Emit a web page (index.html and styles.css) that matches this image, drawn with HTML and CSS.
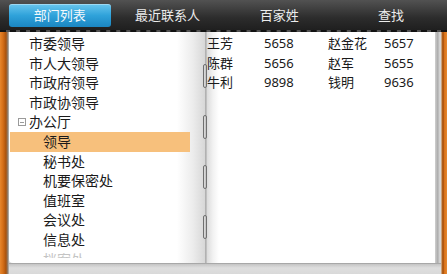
FILE: index.html
```html
<!DOCTYPE html>
<html lang="zh">
<head>
<meta charset="utf-8">
<link rel="stylesheet" href="styles.css">
</head>
<body>
<div class="app">
  <div class="tabs">
    <div class="tab active">部门列表</div>
    <div class="tab">最近联系人</div>
    <div class="tab">百家姓</div>
    <div class="tab">查找</div>
  </div>
  <div class="main">
    <div class="wood-left"></div>
    <div class="book">
      <div class="pages">
        <div class="page-left">
          <div class="list">
            <div class="item l1">市委领导</div>
            <div class="item l1">市人大领导</div>
            <div class="item l1">市政府领导</div>
            <div class="item l1">市政协领导</div>
            <div class="item l0"><span class="toggle"></span>办公厅</div>
            <div class="item l2 selected">领导</div>
            <div class="item l2">秘书处</div>
            <div class="item l2">机要保密处</div>
            <div class="item l2">值班室</div>
            <div class="item l2">会议处</div>
            <div class="item l2">信息处</div>
            <div class="item l2 faded">档案处</div>
          </div>
        </div>
        <div class="spine"></div>
        <div class="page-right">
          <div class="table">
            <span>王芳</span><span>5658</span><span>赵金花</span><span>5657</span>
            <span>陈群</span><span>5656</span><span>赵军</span><span>5655</span>
            <span>牛利</span><span>9898</span><span>钱明</span><span>9636</span>
          </div>
        </div>
        <div class="edge"></div>
        <div class="ring r1"></div>
        <div class="ring r2"></div>
        <div class="ring r3"></div>
        <div class="ring r4"></div>
      </div>
      <div class="bottom"></div>
    </div>
    <div class="wood-right"></div>
  </div>
</div>
</body>
</html>
```

FILE: styles.css
```css
* { box-sizing: border-box; margin: 0; padding: 0; }
html, body { width: 447px; height: 274px; overflow: hidden; }
body { font-family: "Noto Sans", "Noto Sans CJK SC", sans-serif; background: #d6d6d6; }
.app { width: 447px; height: 274px; display: flex; flex-direction: column; }

.tabs {
  height: 32px;
  display: grid;
  grid-template-columns: repeat(4, 1fr);
  padding: 4px 0 3px 0;
  background: linear-gradient(#525252, #2c2c2c 60%, #1f1f1f);
  border-bottom: 2px dashed #111;
}
.tab {
  color: #ececec;
  font-size: 13px;
  display: flex;
  align-items: center;
  justify-content: center;
  line-height: 1;
}
.tab.active {
  margin: 0 1px 0 9px;
  border-radius: 3px;
  color: #f4f8fb;
  background: linear-gradient(#6ac6ee, #2fa2da 50%, #1b86c2);
  box-shadow: inset 0 1px 0 rgba(255,255,255,0.35);
}

.main { flex: 1; display: flex; min-height: 0; }
.wood-left {
  width: 9px;
  background: linear-gradient(90deg, #e7862c 0, #d46e17 3px, #a9520d 6px, #8c8378 8px, #c9c9c9 9px);
}
.wood-right {
  width: 6px;
  background: linear-gradient(90deg, #c8c8c8 0, #cf7a2a 1px, #8f410a 2px, #d66f16 3px, #e58830 6px);
}
.book { flex: 1; display: flex; flex-direction: column; }
.pages { height: 231px; display: flex; position: relative; }
.page-left {
  width: 196px;
  background: linear-gradient(90deg, #fff 0, #fff 168px, #ececec 184px, #d7d7d7 196px);
  border-bottom-left-radius: 4px;
  padding-top: 2px;
}
.list { height: 224px; overflow: hidden; }
.item {
  height: 19.6px;
  line-height: 19.6px;
  font-size: 14px;
  color: #1a1a1a;
  white-space: nowrap;
}
.item.l1 { padding-left: 20px; }
.item.l0 { padding-left: 9px; display: flex; align-items: center; }
.item.l2 { padding-left: 34px; }
.item.selected { background: #f7c07c; margin-right: 15px; margin-left: 1px; padding-left: 33px; }
.item.faded { color: #c4c4c4; }
.toggle {
  width: 8px; height: 8px;
  border: 1px solid #9a9a9a;
  margin-right: 3px;
  position: relative;
}
.toggle::after {
  content: "";
  position: absolute;
  left: 1px; right: 1px; top: 2.5px;
  height: 1px;
  background: #9a9a9a;
}
.spine {
  width: 2px;
  background: linear-gradient(90deg, #a9a9a9, #c8c8c8);
}
.page-right {
  flex: 1;
  background: linear-gradient(90deg, #dcdcdc 0, #f2f2f2 6px, #fff 12px);
  padding-top: 2px;
}
.table {
  display: grid;
  grid-template-columns: 57px 64px 56px auto;
  grid-auto-rows: 19.5px;
  font-size: 13px;
  line-height: 19.5px;
  color: #1a1a1a;
}
.edge {
  width: 6px;
  background: linear-gradient(90deg, #d0d0d0, #a9a9a9 3px, #cfcfcf 4px, #d6d6d6);
}
.ring {
  position: absolute;
  left: 194px;
  width: 4px;
  height: 24px;
  border: 1px solid #6f6f6f;
  border-radius: 2px;
  background: linear-gradient(90deg, #bdbdbd, #f0f0f0, #9b9b9b);
}
.r1 { top: 32px; }
.r2 { top: 83px; }
.r3 { top: 133px; }
.r4 { top: 183px; }
.bottom {
  flex: 1;
  border-top: 1px solid #a8a8a8;
  background: linear-gradient(#c4c4c4, #dedede 4px, #d9d9d9);
}
```
